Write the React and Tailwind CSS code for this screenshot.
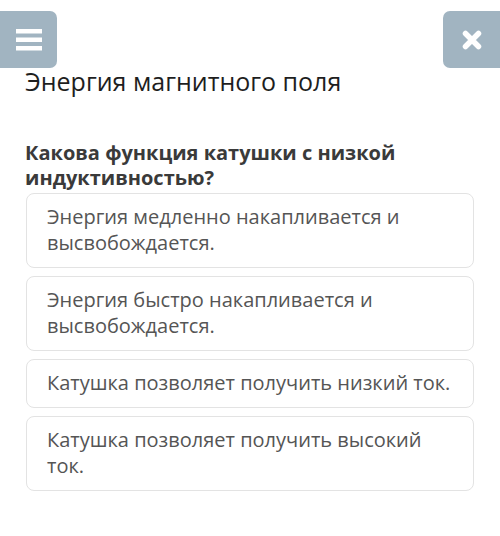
export default function App() {
  const options = [
    "Энергия медленно накапливается и высвобождается.",
    "Энергия быстро накапливается и высвобождается.",
    "Катушка позволяет получить низкий ток.",
    "Катушка позволяет получить высокий ток.",
  ];
  return (
    <div className="w-[500px] h-[536px] bg-white overflow-hidden" style={{ fontFamily: '"Open Sans", "Noto Sans", sans-serif' }}>
      <div className="flex justify-between pt-[11px]">
        <button className="w-[57px] h-[57px] bg-[#a1b4c1] rounded-r-[7px] flex items-center justify-center">
          <svg width="26" height="22" viewBox="0 0 26 22">
            <rect x="0" y="0" width="26" height="4.5" fill="#fff" />
            <rect x="0" y="8.5" width="26" height="4.5" fill="#fff" />
            <rect x="0" y="17" width="26" height="4.5" fill="#fff" />
          </svg>
        </button>
        <button className="w-[57px] h-[57px] bg-[#a1b4c1] rounded-l-[7px] flex items-center justify-center">
          <svg width="20" height="20" viewBox="0 0 20 20">
            <path d="M3.5 3.5 L16.5 16.5 M16.5 3.5 L3.5 16.5" stroke="#fff" strokeWidth="5.5" strokeLinecap="round" />
          </svg>
        </button>
      </div>
      <h1 className="-mt-[3px] ml-[25px] text-[25px] leading-[32px] text-[#1e1e1e] font-normal">Энергия магнитного поля</h1>
      <p className="mt-[43px] mx-[25px] text-[20px] leading-[25px] font-bold text-[#3a3a3a]">
        Какова функция катушки с низкой индуктивностью?
      </p>
      <div className="mt-[3px] mx-[26px] flex flex-col gap-[8px]">
        {options.map((o) => (
          <div key={o} className="border border-[#e3e3e3] rounded-[8px] pl-[20px] pr-[16px] pt-[10px] pb-[11px] text-[20px] leading-[26px] text-[#555]">
            {o}
          </div>
        ))}
      </div>
    </div>
  );
}
